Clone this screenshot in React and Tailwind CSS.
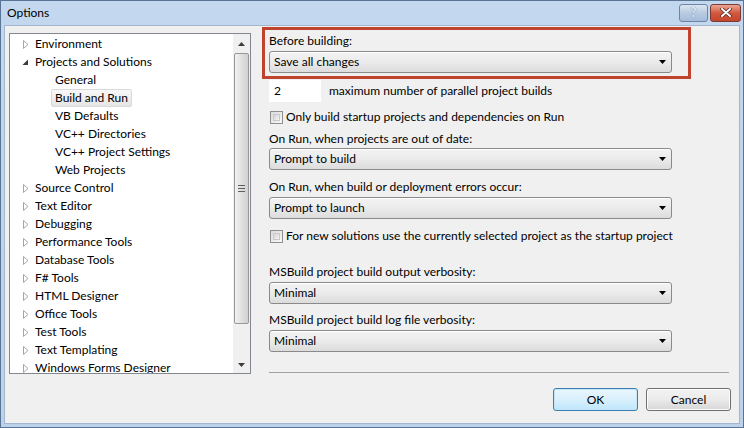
import React from 'react'

const font = { fontFamily: 'Lato, "Liberation Sans", sans-serif' }

const tree = [
  { label: 'Environment', level: 0 },
  { label: 'Projects and Solutions', level: 0, open: true },
  { label: 'General', level: 1 },
  { label: 'Build and Run', level: 1, selected: true },
  { label: 'VB Defaults', level: 1 },
  { label: 'VC++ Directories', level: 1 },
  { label: 'VC++ Project Settings', level: 1 },
  { label: 'Web Projects', level: 1 },
  { label: 'Source Control', level: 0 },
  { label: 'Text Editor', level: 0 },
  { label: 'Debugging', level: 0 },
  { label: 'Performance Tools', level: 0 },
  { label: 'Database Tools', level: 0 },
  { label: 'F# Tools', level: 0 },
  { label: 'HTML Designer', level: 0 },
  { label: 'Office Tools', level: 0 },
  { label: 'Test Tools', level: 0 },
  { label: 'Text Templating', level: 0 },
  { label: 'Windows Forms Designer', level: 0 },
]

const Arrow = ({ open }) =>
  open ? (
    <svg width="7" height="7" viewBox="0 0 7 7">
      <polygon points="6,0.5 6,6 0.5,6" fill="#3b3b3b" />
    </svg>
  ) : (
    <svg width="6" height="9" viewBox="0 0 6 9">
      <polygon points="0.5,0.5 5,4.5 0.5,8.5" fill="none" stroke="#a6a6a6" />
    </svg>
  )

const DownTri = () => (
  <svg width="7" height="4" viewBox="0 0 7 4">
    <polygon points="0,0 7,0 3.5,4" fill="#000" />
  </svg>
)

const Select = ({ value }) => (
  <div className="flex h-[22px] w-[403px] items-center justify-between rounded-[3px] border border-[#8a8a8a] bg-gradient-to-b from-[#f3f3f3] via-[#ebebeb] to-[#dcdcdc] pl-[4px] pr-[5px] shadow-[inset_0_1px_0_#fff]">
    <span className="text-[12px] leading-none text-black">{value}</span>
    <DownTri />
  </div>
)

const Check = ({ label }) => (
  <div className="flex h-[16px] items-center">
    <div className="ml-[1px] h-[13px] w-[13px] border border-[#8e8f8f] bg-gradient-to-br from-[#dcdcdc] to-[#f8f8f8] p-[2px]">
      <div className="h-full w-full border border-[#c9c9c9] bg-gradient-to-br from-[#d5d5d5] to-[#f4f4f4]" />
    </div>
    <span className="ml-[3px] text-[12px] text-black">{label}</span>
  </div>
)

const Label = ({ children, className = '' }) => (
  <div className={`h-[16px] text-[12px] leading-[16px] text-black ${className}`}>{children}</div>
)

export default function App() {
  return (
    <div style={font} className="h-[428px] w-[744px] overflow-hidden border border-[#5a7495] bg-gradient-to-b from-[#c3d8ef] to-[#bcd2ea]">
      <div className="flex h-[24px] items-center justify-between pl-[6px] pr-[2px]">
        <span className="text-[12px] text-black">Options</span>
        <div className="mb-[1px] flex gap-[2px]">
          <div className="flex h-[18px] w-[29px] items-center justify-center rounded-[3px] border border-[#6d86a6] bg-gradient-to-b from-[#dbe6f3] via-[#b8cbe2] to-[#a5bcda]">
            <span className="text-[13px] font-bold leading-none text-[#e8eef6] [text-shadow:0_0_1px_#44546b]">?</span>
          </div>
          <div className="flex h-[18px] w-[31px] items-center justify-center rounded-[3px] border border-[#7c3a33] bg-gradient-to-b from-[#e9a594] via-[#d1583f] to-[#c5452d]">
            <svg width="12" height="9" viewBox="0 0 12 9">
              <path d="M2 1 L10 8 M10 1 L2 8" stroke="#4a1f18" strokeWidth="3.4" strokeLinecap="round" />
              <path d="M2 1 L10 8 M10 1 L2 8" stroke="#fff" strokeWidth="2" strokeLinecap="round" />
            </svg>
          </div>
        </div>
      </div>
      <div className="mx-[3px] flex h-[399px] items-start border border-[#a4b6cd] bg-[#f0f0f0] pl-[4px]">
        {/* tree */}
        <div className="mt-[7px] flex h-[341px] w-[242px] border border-[#828790] bg-white">
          <div className="flex-1 overflow-hidden pt-[1px]">
            {tree.map((t) => (
              <div key={t.label} className="flex h-[18px] items-center">
                {t.level === 0 ? (
                  <>
                    <div className="flex w-[25px] justify-end pr-[6px]">
                      <Arrow open={t.open} />
                    </div>
                    <span className="text-[12px] text-black">{t.label}</span>
                  </>
                ) : (
                  <div className={`ml-[41px] flex h-[18px] items-center px-[3px] ${t.selected ? 'rounded-[2px] border border-[#d9d9d9] bg-gradient-to-b from-[#f8f8f8] to-[#e5e5e5]' : 'border border-transparent'}`}>
                    <span className="text-[12px] text-black">{t.label}</span>
                  </div>
                )}
              </div>
            ))}
          </div>
          <div className="flex w-[17px] flex-col items-center bg-[#f0f0f0]">
            <div className="flex h-[19px] items-center">
              <svg width="7" height="4" viewBox="0 0 7 4"><polygon points="3.5,0 7,4 0,4" fill="#3d3d3d" /></svg>
            </div>
            <div className="flex h-[271px] w-[15px] items-center justify-center rounded-[2px] border border-[#979797] bg-gradient-to-r from-[#f2f2f2] via-[#e0e0e0] to-[#d0d0d0]">
              <svg width="7" height="7" viewBox="0 0 7 7">
                <path d="M0 0.5 H7 M0 3.5 H7 M0 6.5 H7" stroke="#5d5d5d" />
              </svg>
            </div>
            <div className="flex flex-1 items-end pb-[6px]">
              <svg width="7" height="4" viewBox="0 0 7 4"><polygon points="0,0 7,0 3.5,4" fill="#3d3d3d" /></svg>
            </div>
          </div>
        </div>

        {/* options */}
        <div className="ml-[11px] mt-[1px] flex flex-col">
          <div className="w-[429px] border-[3px] border-[#c0432d] pl-[4px] pt-[3px] pb-[3px]">
            <Label>Before building:</Label>
            <div className="mt-[2px]">
              <Select value="Save all changes" />
            </div>
          </div>
          <div className="flex flex-col pl-[7px]">
            <div className="mt-[1px] flex items-center">
              <div className="flex h-[22px] w-[52px] items-center bg-white pl-[5px] text-[12px] text-black">2</div>
              <span className="ml-[8px] text-[12px] text-black">maximum number of parallel project builds</span>
            </div>
            <div className="mt-[7px]">
              <Check label="Only build startup projects and dependencies on Run" />
            </div>
            <Label className="mt-[6px]">On Run, when projects are out of date:</Label>
            <div className="mt-[1px]">
              <Select value="Prompt to build" />
            </div>
            <Label className="mt-[9px]">On Run, when build or deployment errors occur:</Label>
            <div className="mt-[2px]">
              <Select value="Prompt to launch" />
            </div>
            <div className="mt-[9px]">
              <Check label="For new solutions use the currently selected project as the startup project" />
            </div>
            <Label className="mt-[20px]">MSBuild project build output verbosity:</Label>
            <div className="mt-[2px]">
              <Select value="Minimal" />
            </div>
            <Label className="mt-[8px]">MSBuild project build log file verbosity:</Label>
            <div className="mt-[2px]">
              <Select value="Minimal" />
            </div>
            <div className="mt-[20px] h-[1px] w-[460px] bg-[#a0a0a0]" />
            <div className="mt-[15px] flex w-[462px] justify-end gap-[8px]">
              <div className="flex h-[23px] w-[85px] items-center justify-center rounded-[3px] border border-[#3c7fb1] bg-gradient-to-b from-[#eaf6fd] via-[#d9f0fc] to-[#bee6fd] shadow-[inset_0_0_0_1px_#c4e5f6] text-[12px] text-black">
                OK
              </div>
              <div className="flex h-[23px] w-[85px] items-center justify-center rounded-[3px] border border-[#707070] bg-gradient-to-b from-[#f2f2f2] via-[#ebebeb] to-[#d6d6d6] shadow-[inset_0_0_0_1px_#fcfcfc] text-[12px] text-black">
                Cancel
              </div>
            </div>
          </div>
        </div>
      </div>
    </div>
  )
}
